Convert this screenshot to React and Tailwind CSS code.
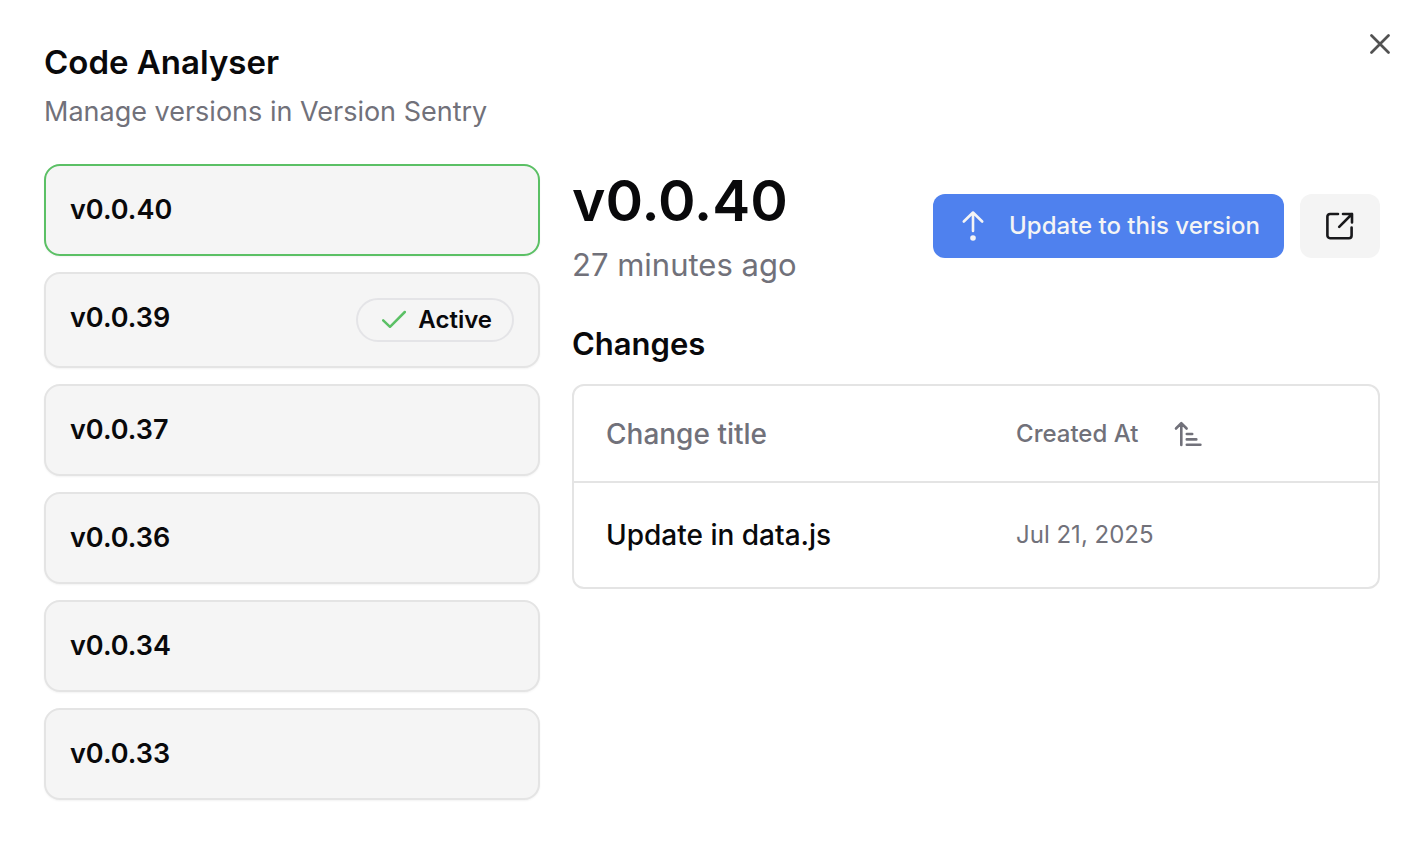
import { useState } from "react";

const versions = [
  { name: "v0.0.40", released: "27 minutes ago" },
  { name: "v0.0.39", active: true },
  { name: "v0.0.37" },
  { name: "v0.0.36" },
  { name: "v0.0.34" },
  { name: "v0.0.33" },
];

const changes = [{ id: 1, title: "Update in data.js", createdAt: "Jul 21, 2025" }];

const CloseIcon = () => (
  <svg width="20" height="20" viewBox="0 0 20 20" fill="none" stroke="currentColor" strokeWidth="2.7" strokeLinecap="round">
    <path d="M1.5 1.5l17 17M18.5 1.5l-17 17" />
  </svg>
);

const CheckIcon = () => (
  <svg width="24" height="20" viewBox="0 0 24 20" fill="none" stroke="currentColor" strokeWidth="2.5" strokeLinecap="round" strokeLinejoin="round">
    <path d="M1.2 10.4L8 16.8L22.8 2" />
  </svg>
);

const UpdateIcon = () => (
  <svg width="32" height="32" viewBox="0 0 32 32" fill="none" stroke="currentColor" strokeWidth="2.6" strokeLinecap="round" strokeLinejoin="round">
    <path d="M16 21V2.5M6.8 11.5L16 2.5l9.2 9" />
    <circle cx="16" cy="28" r="2.8" fill="currentColor" stroke="none" />
  </svg>
);

const OpenIcon = () => (
  <svg width="32" height="32" viewBox="0 0 32 32" fill="none" stroke="currentColor" strokeWidth="2.6" strokeLinecap="round" strokeLinejoin="round">
    <path d="M14 4H6a2.6 2.6 0 0 0-2.6 2.6v19A2.6 2.6 0 0 0 6 28.2h19a2.6 2.6 0 0 0 2.6-2.6V17.5" />
    <path d="M19 4h9v8.5M28 4L15.2 16.8" />
  </svg>
);

const SortIcon = () => (
  <svg width="28" height="26" viewBox="0 0 28 26" fill="none" stroke="currentColor" strokeWidth="2.6" strokeLinecap="round" strokeLinejoin="round">
    <path d="M7.3 24V2.2M2 7.5l5.3-5.3 5.3 5.3M12.8 13h5.4M12.8 18.4h9.5M12.8 23.8h13.6" />
  </svg>
);

const VersionItem = ({ version, selected, onSelect }) => (
  <button
    type="button"
    onClick={onSelect}
    className={`flex w-full items-start justify-between rounded-2xl border-2 bg-[#f5f5f5] p-6 text-left shadow-xs ${
      selected ? "border-[#5bc065]" : "border-[#e4e4e4]"
    }`}
  >
    <span className="text-[27px] leading-10 font-semibold">{version.name}</span>
    {version.active && (
      <span className="flex h-11 items-center gap-3 rounded-full border-2 border-[#e4e4e7] pr-5 pl-6 text-2xl font-semibold">
        <span className="text-[#5bc065]">
          <CheckIcon />
        </span>
        Active
      </span>
    )}
  </button>
);

const App = () => {
  const [selected, setSelected] = useState(versions[0]);

  return (
    <main className="relative min-h-screen bg-white pt-10 pr-[42px] pb-10 pl-11 font-['Inter',sans-serif] text-[#09090b]">
      <button type="button" aria-label="Close" className="absolute top-[34px] right-8 text-[#525252]">
        <CloseIcon />
      </button>

      <header>
        <h1 className="text-[33px] leading-11 font-semibold">Code Analyser</h1>
        <p className="mt-2 text-[27px] leading-10 text-[#71717a]">Manage versions in Version Sentry</p>
      </header>

      <div className="mt-8 grid grid-cols-[62fr_101fr] gap-8">
        <nav className="flex flex-col gap-4">
          {versions.map((version) => (
            <VersionItem
              key={version.name}
              version={version}
              selected={version.name === selected.name}
              onSelect={() => setSelected(version)}
            />
          ))}
        </nav>

        <section>
          <div className="flex items-center justify-between">
            <div>
              <h2 className="text-[57px] leading-[74px] font-semibold">{selected.name}</h2>
              <p className="mt-1 text-[31px] leading-[46px] text-[#71717a]">{selected.released}</p>
            </div>
            <div className="flex gap-4">
              <button
                type="button"
                className="flex h-16 items-center gap-5 rounded-xl bg-[#4f81ee] px-6 text-2xl font-medium text-[#f4f4f5]"
              >
                <UpdateIcon />
                Update to this version
              </button>
              <button
                type="button"
                aria-label="Open version"
                className="flex h-16 w-20 items-center justify-center rounded-xl bg-[#f4f4f4] text-[#18181b]"
              >
                <OpenIcon />
              </button>
            </div>
          </div>

          <h3 className="mt-9 text-[31px] leading-10 font-semibold">Changes</h3>
          <div className="mt-5 overflow-hidden rounded-xl border-2 border-[#e4e4e4]">
            <table className="w-full table-fixed text-left">
              <thead>
                <tr className="h-24 border-b-2 border-[#e4e4e4] text-[#71717a]">
                  <th className="w-[51%] px-8 text-[28px] font-medium">Change title</th>
                  <th className="px-8 text-2xl font-medium">
                    <button type="button" className="flex items-center gap-9">
                      Created At
                      <SortIcon />
                    </button>
                  </th>
                </tr>
              </thead>
              <tbody>
                {changes.map((change) => (
                  <tr key={change.id} className="h-[105px]">
                    <td className="px-8 text-[28px] font-medium">{change.title}</td>
                    <td className="px-8 text-2xl text-[#71717a]">{change.createdAt}</td>
                  </tr>
                ))}
              </tbody>
            </table>
          </div>
        </section>
      </div>
    </main>
  );
};

export default App;
